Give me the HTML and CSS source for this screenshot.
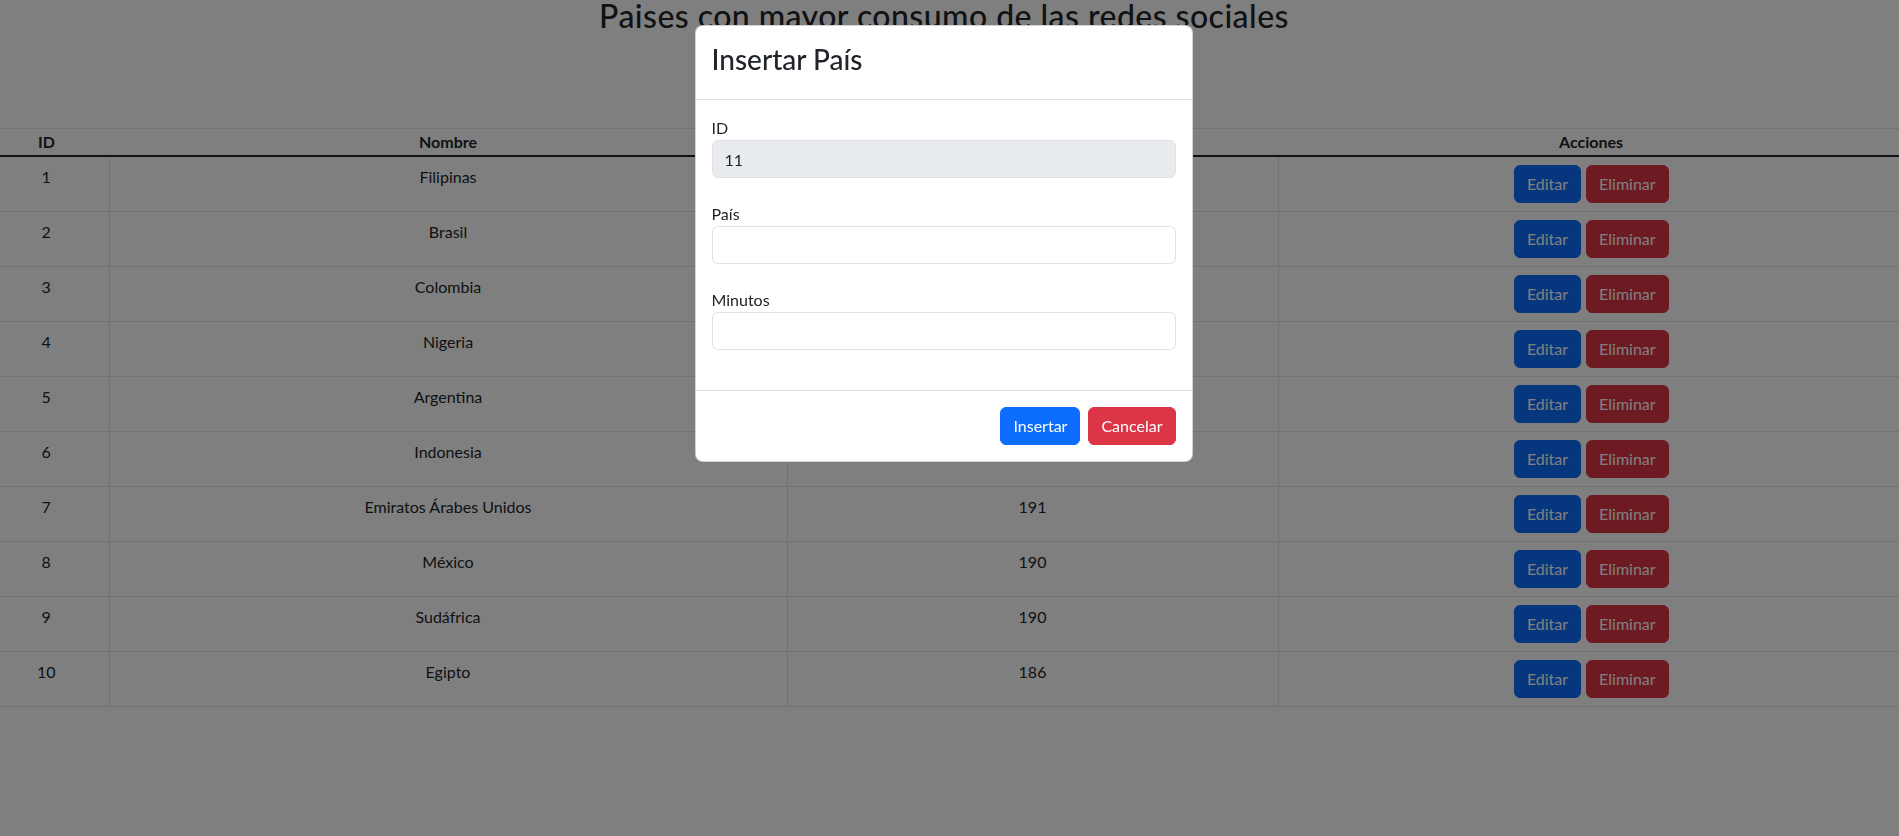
FILE: index.html
```html
<!DOCTYPE html>
<html lang="es">
<head>
<meta charset="utf-8">
<title>Paises con mayor consumo de las redes sociales</title>
<link rel="stylesheet" href="styles.css">
</head>
<body class="modal-open">
<main class="page">
  <h2 class="page-title">Paises con mayor consumo de las redes sociales</h2>
  <div class="table-wrap">
    <table class="table">
      <colgroup>
        <col class="c-id"><col class="c-name"><col class="c-min"><col class="c-act">
      </colgroup>
      <thead>
        <tr><th>ID</th><th>Nombre</th><th>Minutos</th><th>Acciones</th></tr>
      </thead>
      <tbody>
        <tr><td>1</td><td>Filipinas</td><td>241</td><td><div class="actions"><button class="btn btn-primary">Editar</button><button class="btn btn-danger">Eliminar</button></div></td></tr>
        <tr><td>2</td><td>Brasil</td><td>225</td><td><div class="actions"><button class="btn btn-primary">Editar</button><button class="btn btn-danger">Eliminar</button></div></td></tr>
        <tr><td>3</td><td>Colombia</td><td>216</td><td><div class="actions"><button class="btn btn-primary">Editar</button><button class="btn btn-danger">Eliminar</button></div></td></tr>
        <tr><td>4</td><td>Nigeria</td><td>215</td><td><div class="actions"><button class="btn btn-primary">Editar</button><button class="btn btn-danger">Eliminar</button></div></td></tr>
        <tr><td>5</td><td>Argentina</td><td>209</td><td><div class="actions"><button class="btn btn-primary">Editar</button><button class="btn btn-danger">Eliminar</button></div></td></tr>
        <tr><td>6</td><td>Indonesia</td><td>197</td><td><div class="actions"><button class="btn btn-primary">Editar</button><button class="btn btn-danger">Eliminar</button></div></td></tr>
        <tr><td>7</td><td>Emiratos Árabes Unidos</td><td>191</td><td><div class="actions"><button class="btn btn-primary">Editar</button><button class="btn btn-danger">Eliminar</button></div></td></tr>
        <tr><td>8</td><td>México</td><td>190</td><td><div class="actions"><button class="btn btn-primary">Editar</button><button class="btn btn-danger">Eliminar</button></div></td></tr>
        <tr><td>9</td><td>Sudáfrica</td><td>190</td><td><div class="actions"><button class="btn btn-primary">Editar</button><button class="btn btn-danger">Eliminar</button></div></td></tr>
        <tr><td>10</td><td>Egipto</td><td>186</td><td><div class="actions"><button class="btn btn-primary">Editar</button><button class="btn btn-danger">Eliminar</button></div></td></tr>
      </tbody>
    </table>
  </div>
</main>

<div class="backdrop"></div>

<div class="modal">
  <div class="modal-dialog">
    <div class="modal-content">
      <div class="modal-header">
        <h3 class="modal-title">Insertar País</h3>
      </div>
      <div class="modal-body">
        <div class="field">
          <label class="field-label">ID</label>
          <input class="form-control" type="text" value="11" disabled>
        </div>
        <div class="field">
          <label class="field-label">País</label>
          <input class="form-control" type="text">
        </div>
        <div class="field">
          <label class="field-label">Minutos</label>
          <input class="form-control" type="text">
        </div>
      </div>
      <div class="modal-footer">
        <button class="btn btn-primary">Insertar</button>
        <button class="btn btn-danger">Cancelar</button>
      </div>
    </div>
  </div>
</div>
</body>
</html>
```

FILE: styles.css
```css
* { box-sizing: border-box; }

html, body { height: 100%; }

body {
  margin: 0;
  padding-right: 11px;
  overflow: hidden;
  background: #ffffff;
  color: #212529;
  font-family: Lato, "Open Sans", sans-serif;
  font-size: 16px;
  line-height: 1.5;
}

.page-title {
  margin: 0 0 96px;
  font-size: 32px;
  font-weight: 500;
  line-height: 1;
  letter-spacing: 0.45px;
  text-align: center;
}

.table-wrap {
  margin: 0 -16px;
}

.table {
  width: 1920px;
  border-collapse: collapse;
  table-layout: fixed;
  text-align: center;
  vertical-align: top;
}

.c-id { width: 125px; }
.c-name { width: 678px; }
.c-min { width: 491px; }
.c-act { width: 626px; }

.table thead tr { border-top: 1px solid #dee2e6; }

.table th {
  padding: 1px 8px 1px;
  font-weight: 700;
  border-bottom: 2px solid #212529;
}

.table td {
  padding: 8px;
  vertical-align: top;
  border-bottom: 1px solid #dee2e6;
}

.table td + td { border-left: 1px solid #dee2e6; }

.actions {
  display: flex;
  justify-content: center;
  gap: 5px;
}

.btn {
  display: inline-block;
  padding: 6px 12px;
  border: 1px solid transparent;
  border-radius: 6px;
  font-family: inherit;
  font-size: 16px;
  line-height: 24px;
  color: #ffffff;
  cursor: pointer;
}

.btn-primary { background: #0d6efd; border-color: #0d6efd; }
.btn-danger { background: #dc3545; border-color: #dc3545; }

.backdrop {
  position: fixed;
  inset: 0;
  background: rgba(0, 0, 0, 0.5);
}

.modal {
  position: fixed;
  inset: 0;
  padding-right: 12px;
  display: flex;
  justify-content: center;
  align-items: flex-start;
}

.modal-dialog {
  width: 498px;
  margin-top: 25px;
}

.modal-content {
  background: #ffffff;
  border: 1px solid rgba(0, 0, 0, 0.175);
  border-radius: 8px;
}

.modal-header {
  padding: 12px 16px 19px;
  border-bottom: 1px solid #dee2e6;
}

.modal-title {
  margin: 0;
  font-size: 28px;
  font-weight: 500;
  line-height: 1.5;
}

.modal-body {
  padding: 16px;
}

.field { margin-bottom: 24px; }

.field-label { display: block; }

.form-control {
  display: block;
  width: 100%;
  height: 38px;
  padding: 6px 12px;
  border: 1px solid #dee2e6;
  border-radius: 6px;
  background: #ffffff;
  color: #212529;
  font-family: inherit;
  font-size: 16px;
  line-height: 24px;
}

.form-control:disabled {
  background: #e9ecef;
  color: #212529;
  opacity: 1;
}

.modal-footer {
  display: flex;
  justify-content: flex-end;
  gap: 8px;
  padding: 16px;
  border-top: 1px solid #dee2e6;
}
```
